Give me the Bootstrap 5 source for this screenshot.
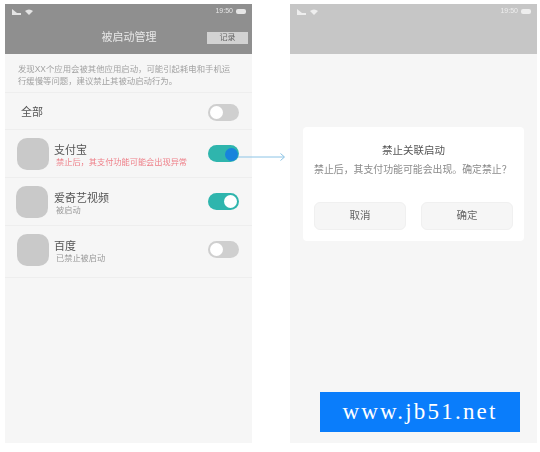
<!DOCTYPE html>
<html lang="zh"><head><meta charset="utf-8">
<link href="https://cdn.jsdelivr.net/npm/bootstrap@5.3.0/dist/css/bootstrap.min.css" rel="stylesheet">
<style>
html,body{margin:0;background:#fff;overflow:hidden}
body{font-family:"Liberation Sans","Noto Sans CJK SC",sans-serif;color:#555;width:540px;height:452px;position:relative}
.stage{padding:4px 3px 0 5px;justify-content:space-between}
.phone{width:247px;height:439px;background:#f6f6f6}
.topbar{height:50px;background:#8f8f8f;padding:0 4px 0 5px;color:#e6e6e6}
.topbar.pale{background:#c6c6c6;color:#eee}
.statusline{height:15px;font-size:7px;padding:0 2px}
.batt{width:10px;height:5px;background:currentColor;border-radius:2px;margin-left:3px}
.titleline{height:25px;margin-top:6px;position:relative;font-size:11px;color:#e8e8e8}
.recbtn{position:absolute;right:0;top:7px;width:41px;height:12px;background:#d2d2d2;color:#666;font-size:8px;line-height:12px;text-align:center}
.intro{height:39px;padding:9px 17px 0 13px;font-size:8.4px;line-height:12px;color:#a2a2a2;border-bottom:1px solid #eeeeee}
.allrow{height:37px;padding:2px 13px 0 16px;font-size:11px;color:#555;border-bottom:1px solid #eee}
.approw{height:48px;padding:0 13px 0 12px;border-bottom:1px solid #eee}
.approw.last{height:52px;padding-bottom:4px}
.appicon{width:32px;height:32px;background:#c9c9c9;border-radius:10px;flex:none}
.appicon.nudged{margin-left:-1px;margin-right:1px}
.appname{font-size:11px;line-height:14px;color:#555}
.appnote{font-size:8.2px;line-height:12px;color:#999;margin-left:2px}
.appnote.warn{color:#ee7f88}
.appinfo{margin-left:5px;padding-top:4px}
.sw{width:31px;height:17px;border-radius:9px;background:#cfcfcf;position:relative;flex:none}
.sw::after{content:"";position:absolute;width:13px;height:13px;border-radius:50%;background:#fff;top:2px;left:2px}
.sw.on{background:#2fb5ad}
.sw.on::after{left:auto;right:2px}
.sw.sel::after{background:#1784dc;right:1px;top:3px}
.dlgwrap{padding:73px 13px 0}
.dlg{background:#fff;height:114px;border-radius:4px;padding:16px 11px 0}
.dlgtitle{font-size:10.5px;line-height:14px;color:#555;text-align:center}
.dlgtext{font-size:9.9px;line-height:14px;color:#8b8b8b;margin-top:6px;white-space:nowrap}
.dlgbtns{margin-top:25px;gap:15px}
.dlgbtn{width:93px;height:28px;background:#f6f6f6;border:1px solid #f0f0f0;border-radius:6px;font-size:10.5px;color:#666;padding:0}
.arrowline{position:absolute;left:238px;top:150px}
.mark51{position:absolute;left:320px;top:392px;width:200px;height:40px;background:#0a7dfb;color:#fff;font-family:"Liberation Serif",serif;font-size:23px;line-height:40px;text-align:center;letter-spacing:2.2px;white-space:nowrap}
.soft{filter:blur(.45px)}
</style></head><body>
<div class="stage d-flex">
  <div class="phone d-flex flex-column soft">
    <div class="topbar">
      <div class="statusline d-flex align-items-center justify-content-between">
        <div class="d-flex align-items-center gap-1">
          <svg width="9" height="6" viewBox="0 0 9 6"><path d="M0 6V0l5 4h4v2z" fill="#e4e4e4"/></svg>
          <svg width="8" height="6" viewBox="0 0 8 6"><path d="M0 2a6 6 0 0 1 8 0L4 6z" fill="#e4e4e4"/></svg>
        </div>
        <div class="d-flex align-items-center">19:50<span class="batt"></span></div>
      </div>
      <div class="titleline d-flex align-items-center justify-content-center"><span>被启动管理</span><span class="recbtn">记录</span></div>
    </div>
    <div class="intro">发现XX个应用会被其他应用启动，可能引起耗电和手机运行缓慢等问题，建议禁止其被动启动行为。</div>
    <div class="allrow d-flex align-items-center justify-content-between"><span>全部</span><span class="sw"></span></div>
    <div class="approw d-flex align-items-center">
      <div class="appicon"></div>
      <div class="appinfo flex-grow-1"><div class="appname">支付宝</div><div class="appnote warn">禁止后，其支付功能可能会出现异常</div></div>
      <span class="sw on sel"></span>
    </div>
    <div class="approw d-flex align-items-center">
      <div class="appicon nudged"></div>
      <div class="appinfo flex-grow-1"><div class="appname">爱奇艺视频</div><div class="appnote">被启动</div></div>
      <span class="sw on"></span>
    </div>
    <div class="approw last d-flex align-items-center">
      <div class="appicon"></div>
      <div class="appinfo flex-grow-1"><div class="appname">百度</div><div class="appnote">已禁止被启动</div></div>
      <span class="sw"></span>
    </div>
  </div>
  <div class="phone d-flex flex-column soft">
    <div class="topbar pale">
      <div class="statusline d-flex align-items-center justify-content-between">
        <div class="d-flex align-items-center gap-1">
          <svg width="9" height="6" viewBox="0 0 9 6"><path d="M0 6V0l5 4h4v2z" fill="#eee"/></svg>
          <svg width="8" height="6" viewBox="0 0 8 6"><path d="M0 2a6 6 0 0 1 8 0L4 6z" fill="#eee"/></svg>
        </div>
        <div class="d-flex align-items-center">19:50<span class="batt"></span></div>
      </div>
    </div>
    <div class="dlgwrap">
      <div class="dlg">
        <div class="dlgtitle">禁止关联启动</div>
        <div class="dlgtext">禁止后，其支付功能可能会出现。确定禁止？</div>
        <div class="dlgbtns d-flex">
          <button class="btn dlgbtn" type="button">取消</button>
          <button class="btn dlgbtn" type="button">确定</button>
        </div>
      </div>
    </div>
  </div>
</div>
<svg class="arrowline" width="50" height="14" viewBox="0 0 50 14"><path d="M0 7H46M42.500 3.500 46.500 7 42.500 10.500" fill="none" stroke="#8cc4e6" stroke-width="1"/></svg>
<div class="mark51">www.jb51.net</div>
</body></html>
